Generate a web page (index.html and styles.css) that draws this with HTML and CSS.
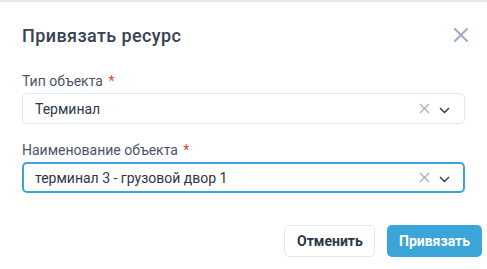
FILE: index.html
```html
<!DOCTYPE html>
<html lang="ru">
<head>
<meta charset="utf-8">
<link rel="stylesheet" href="styles.css">
</head>
<body>
<div class="dialog">
  <div class="header">
    <h2 class="title">Привязать ресурс</h2>
    <button class="close" aria-label="Закрыть">
      <svg width="14" height="14" viewBox="0 0 14 14"><path d="M1 1L13 13M13 1L1 13" stroke="#a0aec0" stroke-width="2" stroke-linecap="square"/></svg>
    </button>
  </div>
  <div class="field">
    <label class="label">Тип объекта <span class="req">*</span></label>
    <div class="select">
      <span class="value">Терминал</span>
      <span class="icons">
        <svg width="11" height="11" viewBox="0 0 11 11"><path d="M1 1L10 10M10 1L1 10" stroke="#a0aec0" stroke-width="1.3"/></svg>
        <svg width="11" height="7" viewBox="0 0 11 7"><path d="M1 1L5.5 5.5L10 1" fill="none" stroke="#2d3748" stroke-width="1.4"/></svg>
      </span>
    </div>
  </div>
  <div class="field">
    <label class="label">Наименование объекта <span class="req">*</span></label>
    <div class="select focused">
      <span class="value">терминал 3 - грузовой двор 1</span>
      <span class="icons">
        <svg width="11" height="11" viewBox="0 0 11 11"><path d="M1 1L10 10M10 1L1 10" stroke="#a0aec0" stroke-width="1.3"/></svg>
        <svg width="11" height="7" viewBox="0 0 11 7"><path d="M1 1L5.5 5.5L10 1" fill="none" stroke="#2d3748" stroke-width="1.4"/></svg>
      </span>
    </div>
  </div>
  <div class="footer">
    <button class="btn btn-secondary">Отменить</button>
    <button class="btn btn-primary">Привязать</button>
  </div>
</div>
</body>
</html>
```

FILE: styles.css
```css
html, body {
  margin: 0;
  padding: 0;
  background: #fff;
}
body {
  font-family: Roboto, "Noto Sans", sans-serif;
  width: 487px;
  height: 269px;
  overflow: hidden;
  border-top: 2px solid #e8e9ec;
  box-sizing: border-box;
}
.dialog {
  padding: 0 0 0 22px;
  width: 443px;
}
.header {
  display: flex;
  align-items: center;
  justify-content: space-between;
  height: 70px;
  margin-top: -2px;
}
.title {
  margin: 0;
  font-size: 18px;
  font-weight: 500;
  color: #364152;
  letter-spacing: 0.4px;
}
.close {
  border: 0;
  background: none;
  padding: 0;
  margin-right: -3px;
  display: flex;
}
.field {
  display: flex;
  flex-direction: column;
}
.label {
  font-size: 14px;
  color: #4a5568;
  height: 22px;
  line-height: 22px;
  margin-bottom: 1px;
}
.req {
  color: #e53e3e;
  margin-left: 2px;
}
.select {
  box-sizing: border-box;
  height: 31px;
  border: 1px solid #e2e8f0;
  border-radius: 5px;
  display: flex;
  align-items: center;
  justify-content: space-between;
  padding: 0 14px 0 12px;
  margin-bottom: 15px;
}
.select.focused {
  border: 2px solid #3ea4d8;
  padding: 0 13px 0 11px;
}
.value {
  font-size: 14px;
  color: #2d3748;
}
.icons {
  display: flex;
  align-items: center;
  gap: 9px;
}
.icons svg:last-child {
  margin-top: 3px;
}
.footer {
  display: flex;
  justify-content: flex-end;
  gap: 12px;
  margin-top: 17px;
  margin-right: -17px;
}
.btn {
  font-family: Roboto, "Noto Sans", sans-serif;
  font-size: 14px;
  font-weight: 700;
  height: 32px;
  border-radius: 5px;
  padding: 0 12px;
}
.btn-secondary {
  background: #fff;
  border: 1px solid #e2e8f0;
  color: #2d3748;
  width: 91px;
}
.btn-primary {
  background: #3ba5d9;
  border: 0;
  color: #fff;
  width: 95px;
}
```
